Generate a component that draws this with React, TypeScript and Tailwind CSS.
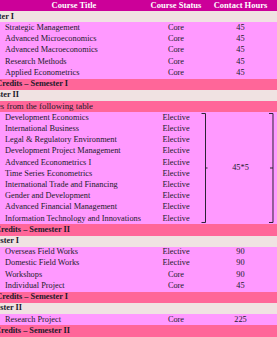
import React from "react";

const ROW = "flex h-[11.2333px] items-center";
const MAG = "bg-[#ff99ff]";
const PINK = "bg-[#ff6699]";
const GRAY = "bg-[#f0e2e2]";

function Course({ title, status, hours }: { title: string; status: string; hours?: string }) {
  return (
    <div className={`${ROW} ${MAG}`}>
      <div className="w-[148px] shrink-0 whitespace-nowrap pl-[5px]">{title}</div>
      <div className="w-[56px] shrink-0 text-center">{status}</div>
      {hours !== undefined && <div className="flex-1 text-center">{hours}</div>}
    </div>
  );
}

function Label({ text, end, bg, bold = true, big = false }: { text: string; end: string; bg: string; bold?: boolean; big?: boolean }) {
  return (
    <div className={`${ROW} ${bg}`}>
      <div className={`flex shrink-0 justify-end whitespace-nowrap ${end} ${bold ? "font-bold" : ""} ${big ? "text-[8.9px]" : ""}`}>
        <span className="shrink-0">{text}</span>
      </div>
    </div>
  );
}

export default function App() {
  const electives = [
    "Development Economics",
    "International Business",
    "Legal & Regulatory Environment",
    "Development Project Management",
    "Advanced Econometrics I",
    "Time Series Econometrics",
    "International Trade and Financing",
    "Gender and Development",
    "Advanced Financial Management",
    "Information Technology and Innovations",
  ];
  return (
    <div className="h-[337px] w-[277px] overflow-hidden bg-white font-['Liberation_Serif','Times_New_Roman',serif] text-[8.3px] leading-none text-[#221a2a]">
      <div className={`${ROW} bg-[#cc0099] text-[8.5px] font-bold text-white`}>
        <div className="w-[148px] shrink-0 text-center">Course Title</div>
        <div className="w-[56px] shrink-0 text-center">Course Status</div>
        <div className="flex-1 text-center">Contact Hours</div>
      </div>
      <Label text="Semester I" end="w-[14px]" bg={GRAY} />
      <Course title="Strategic Management" status="Core" hours="45" />
      <Course title="Advanced Microeconomics" status="Core" hours="45" />
      <Course title="Advanced  Macroeconomics" status="Core" hours="45" />
      <Course title="Research Methods" status="Core" hours="45" />
      <Course title="Applied Econometrics" status="Core" hours="45" />
      <Label text="Total Credits – Semester I" end="w-[68px]" bg={PINK} />
      <Label text="Semester II" end="w-[19px]" bg={GRAY} />
      <Label text="Choose any five courses from the following table" end="w-[93px]" bg={PINK} bold={false} big />
      <div className={`flex ${MAG}`}>
        <div className="w-[204px] shrink-0">
          {electives.map((e) => (
            <Course key={e} title={e} status="Elective" />
          ))}
        </div>
        <div className="relative flex flex-1 items-center justify-center">
          <span>45*5</span>
          <svg className="absolute left-0 top-0 overflow-visible" width="73" height="112.3" viewBox="0 0 73 112.3">
            <g stroke="#2a2233" strokeWidth="1" fill="none">
              <path d="M-2.5 1.5 H1.5 V110.5 H-2.5" />
              <path d="M1.5 56 H3.5" />
              <path d="M65 1.5 H69 V110.5 H65" />
              <path d="M66 56 H69" />
            </g>
          </svg>
        </div>
      </div>
      <Label text="Total Credits – Semester II" end="w-[70px]" bg={PINK} />
      <Label text="Semester I" end="w-[19px]" bg={GRAY} />
      <Course title="Overseas Field Works" status="Elective" hours="90" />
      <Course title="Domestic Field Works" status="Elective" hours="90" />
      <Course title="Workshops" status="Core" hours="90" />
      <Course title="Individual Project" status="Core" hours="45" />
      <Label text="Total Credits – Semester I" end="w-[68px]" bg={PINK} />
      <Label text="Semester II" end="w-[22px]" bg={GRAY} />
      <Course title="Research Project" status="Core" hours="225" />
      <Label text="Total Credits – Semester II" end="w-[70px]" bg={PINK} />
    </div>
  );
}
